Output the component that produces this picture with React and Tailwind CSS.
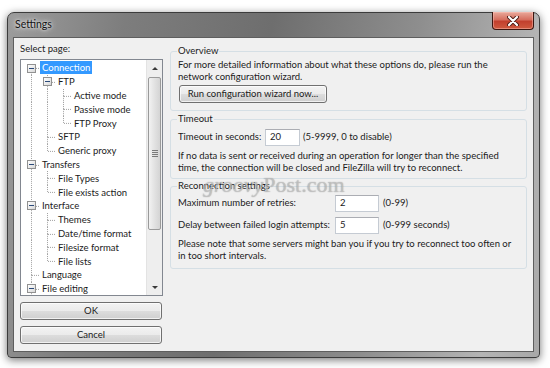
import React from 'react';

const font = { fontFamily: 'Lato, "Liberation Sans", sans-serif' };

// g = guide columns (ancestor has next sibling), n = node has next sibling,
// c = has children (expander), f = first root node
const treeRows = [
    {label: 'Connection', g: [], n: true, c: true, f: true, sel: true},
    {label: 'FTP', g: [true], n: true, c: true},
    {label: 'Active mode', g: [true, true], n: true},
    {label: 'Passive mode', g: [true, true], n: true},
    {label: 'FTP Proxy', g: [true, true], n: false},
    {label: 'SFTP', g: [true], n: true},
    {label: 'Generic proxy', g: [true], n: false},
    {label: 'Transfers', g: [], n: true, c: true},
    {label: 'File Types', g: [true], n: true},
    {label: 'File exists action', g: [true], n: false},
    {label: 'Interface', g: [], n: true, c: true},
    {label: 'Themes', g: [true], n: true},
    {label: 'Date/time format', g: [true], n: true},
    {label: 'Filesize format', g: [true], n: true},
    {label: 'File lists', g: [true], n: false},
    {label: 'Language', g: [], n: true},
    {label: 'File editing', g: [], n: true, c: true},
];

const dot = {stroke: '#a0a0a0', strokeWidth: 1, strokeDasharray: '1 1'};

function Guide({on}) {
    return (
        <svg width="16" height="14" viewBox="0 0 16 14" preserveAspectRatio="none" className="h-full shrink-0">
            {on && <line x1="7.5" y1="0" x2="7.5" y2="14" style={dot} />}
        </svg>
    );
}

function Connector({row}) {
    return (
        <div className="relative w-[16px] h-full shrink-0">
            <svg width="16" height="14" viewBox="0 0 16 14" preserveAspectRatio="none" className="h-full">
                {!row.f && <line x1="7.5" y1="0" x2="7.5" y2="7" style={dot} />}
                {row.n && <line x1="7.5" y1="7" x2="7.5" y2="14" style={dot} />}
                <line x1="8" y1="7.5" x2="16" y2="7.5" style={dot} />
            </svg>
            {row.c && (
                <div className="absolute left-[3px] top-[2.5px] w-[9px] h-[9px] border border-[#919191] bg-gradient-to-br from-white to-[#d8d8d8] flex items-center justify-center">
                    <div className="w-[5px] h-px bg-[#2b4a7a]" />
                </div>
            )}
        </div>
    );
}

function TreeRow({row}) {
    return (
        <div className="flex items-center h-[13.8px]">
            {row.g.map((on, i) => <Guide key={i} on={on} />)}
            <Connector row={row} />
            <span className={`px-[2px] leading-[13px] whitespace-nowrap ${row.sel ? 'bg-[#3399ff] text-white' : 'text-[#1b1b1b]'}`}>
                {row.label}
            </span>
        </div>
    );
}

function Scrollbar() {
    return (
        <div className="w-[16px] flex flex-col bg-[#eeeeee] border-l border-[#e3e3e3]">
            <div className="h-[17px] flex items-center justify-center">
                <div className="w-0 h-0 border-l-[3px] border-r-[3px] border-b-[3px] border-l-transparent border-r-transparent border-b-[#3a3a3a]" />
            </div>
            <div className="mx-[1px] h-[153px] rounded-[2px] border border-[#9a9a9a] bg-gradient-to-r from-[#f2f2f2] via-[#e2e2e2] to-[#d4d4d4] flex flex-col items-center justify-center gap-[1px]">
                <div className="w-[6px] h-px bg-[#7a7a7a]" />
                <div className="w-[6px] h-px bg-[#7a7a7a]" />
                <div className="w-[6px] h-px bg-[#7a7a7a]" />
                <div className="w-[6px] h-px bg-[#7a7a7a]" />
            </div>
            <div className="flex-1" />
            <div className="h-[16px] flex items-center justify-center">
                <div className="w-0 h-0 border-l-[3px] border-r-[3px] border-t-[3px] border-l-transparent border-r-transparent border-t-[#3a3a3a]" />
            </div>
        </div>
    );
}

function WinButton({children, className = ''}) {
    return (
        <div className={`h-[18px] rounded-[3px] border border-[#707070] bg-[linear-gradient(#f3f3f3_0%,#ebebeb_49%,#dddddd_50%,#cfcfcf_100%)] shadow-[inset_0_0_0_1px_rgba(255,255,255,0.7)] flex items-center justify-center text-[#1b1b1b] whitespace-nowrap ${className}`}>
            {children}
        </div>
    );
}

function TextBox({value, className = ''}) {
    return (
        <div className={`h-[17px] bg-white border border-[#c5cbd3] border-t-[#abadb3] pl-[4px] flex items-center text-[#1b1b1b] ${className}`}>
            {value}
        </div>
    );
}

function Group({title, children, className = ''}) {
    return (
        <fieldset className={`border border-[#d5dfe5] rounded-[3px] px-[7px] whitespace-nowrap ${className}`}>
            <legend className="px-[1px] -ml-[1px] leading-[12px] text-[#1b1b1b]">{title}</legend>
            {children}
        </fieldset>
    );
}

export default function App() {
    return (
        <div className="w-[550px] h-[368px] bg-white pt-[12px] pl-[7px] overflow-hidden text-[9.5px]" style={font}>
            <div className="relative w-[533px] h-[346px] rounded-t-[7px] rounded-b-[4px] border border-[#3c3c3c] bg-[linear-gradient(100deg,#9c9c9c_0%,#7d7d7d_20%,#6e6e6e_45%,#8e8e8e_70%,#b4b4b4_90%,#a8a8a8_100%)] shadow-[0_2px_9px_rgba(0,0,0,0.55)] flex flex-col">
                <div className="h-[24px] flex items-center pl-[7px] shrink-0">
                    <span className="text-[10.5px] text-[#141414] [text-shadow:0_0_6px_rgba(255,255,255,0.9),0_0_3px_rgba(255,255,255,0.8)]">Settings</span>
                </div>

                <div className="absolute right-[5px] top-[-1px] w-[42px] h-[18px] rounded-b-[4px] border border-[#3b1610] border-t-0 bg-[linear-gradient(#e9a99b_0%,#d66f5f_45%,#c2402e_55%,#cf5a3f_100%)] shadow-[inset_0_0_0_1px_rgba(255,200,190,0.45)] flex items-center justify-center">
                    <svg width="12" height="10" viewBox="0 0 12 10">
                        <path d="M2 1 L10 9 M10 1 L2 9" stroke="#4a1a12" strokeWidth="4" strokeLinecap="round" />
                        <path d="M2 1 L10 9 M10 1 L2 9" stroke="#ffffff" strokeWidth="2.2" strokeLinecap="round" />
                    </svg>
                </div>

                <div className="mx-[5px] mb-[5px] flex-1 bg-[#f0f0f0] border border-[#5e5e5e] flex">
                    <div className="w-[156px] pl-[6px] pt-[5px] flex flex-col shrink-0">
                        <div className="leading-[12px] text-[#1b1b1b]">Select page:</div>
                        <div className="mt-[4px] w-[143px] h-[237px] bg-white border border-[#828790] flex overflow-hidden">
                            <div className="flex-1 pl-[3px] pt-[1px] overflow-hidden">
                                {treeRows.map((row) => <TreeRow key={row.label} row={row} />)}
                            </div>
                            <Scrollbar />
                        </div>
                        <WinButton className="mt-[6px] w-[142px]">OK</WinButton>
                        <WinButton className="mt-[6px] w-[142px]">Cancel</WinButton>
                    </div>

                    <div className="relative flex-1 pr-[6px] pt-[7px] flex flex-col">
                        <Group title="Overview">
                            <div className="pt-[2px] leading-[11.5px] text-[#1b1b1b]">
                                For more detailed information about what these options do, please run the<br />
                                network configuration wizard.
                            </div>
                            <WinButton className="mt-[3px] mb-[7px] w-[148px] ml-[1px]">Run configuration wizard now...</WinButton>
                        </Group>

                        <Group title="Timeout" className="mt-[2px]">
                            <div className="flex items-center mt-[4px] text-[#1b1b1b]">
                                <span className="w-[87px]">Timeout in seconds:</span>
                                <TextBox value="20" className="w-[35px]" />
                                <span className="ml-[3px]">(5-9999, 0 to disable)</span>
                            </div>
                            <div className="mt-[4px] mb-[4px] leading-[12px] text-[#1b1b1b]">
                                If no data is sent or received during an operation for longer than the specified<br />
                                time, the connection will be closed and FileZilla will try to reconnect.
                            </div>
                        </Group>

                        <Group title="Reconnection settings" className="mt-[1px]">
                            <div className="flex items-center mt-[3px] text-[#1b1b1b]">
                                <span className="w-[157px]">Maximum number of retries:</span>
                                <TextBox value="2" className="w-[44px]" />
                                <span className="ml-[4px]">(0-99)</span>
                            </div>
                            <div className="flex items-center mt-[5px] text-[#1b1b1b]">
                                <span className="w-[157px]">Delay between failed login attempts:</span>
                                <TextBox value="5" className="w-[44px]" />
                                <span className="ml-[4px]">(0-999 seconds)</span>
                            </div>
                            <div className="mt-[4px] mb-[6px] leading-[12px] text-[#1b1b1b]">
                                Please note that some servers might ban you if you try to reconnect too often or<br />
                                in too short intervals.
                            </div>
                        </Group>

                        <div className="absolute left-[33px] top-[136px] text-[22px] leading-none text-[rgba(215,215,215,0.55)] [text-shadow:0_0_1px_rgba(80,80,80,0.55)] pointer-events-none" style={{fontFamily: '"Liberation Serif", serif'}}>
                            <span className="italic">groovy</span>Post.com
                        </div>
                    </div>
                </div>
            </div>
        </div>
    );
}
